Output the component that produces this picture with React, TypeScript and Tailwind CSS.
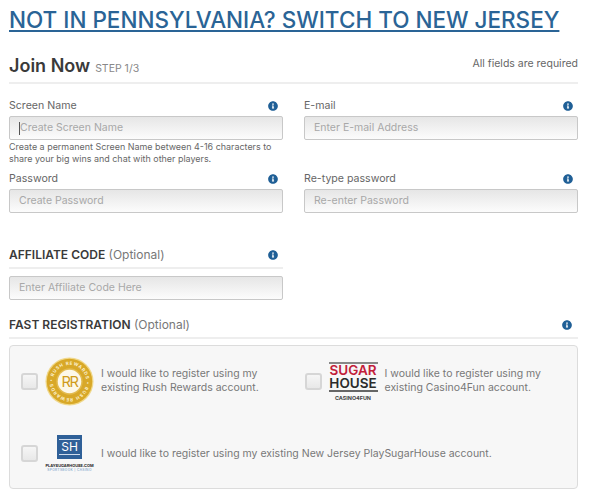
import React from "react";

const font = "font-['Inter','Liberation_Sans',sans-serif]";

const InfoIcon: React.FC = () => (
  <svg viewBox="0 0 512 512" className="w-[10px] h-[10px] fill-[#1f5f96]">
    <path d="M256 8C119 8 8 119 8 256s111 248 248 248 248-111 248-248S393 8 256 8zm0 110c23 0 42 19 42 42s-19 42-42 42-42-19-42-42 19-42 42-42zm56 254c0 7-5 12-12 12h-88c-7 0-12-5-12-12v-24c0-7 5-12 12-12h12v-64h-12c-7 0-12-5-12-12v-24c0-7 5-12 12-12h64c7 0 12 5 12 12v100h12c7 0 12 5 12 12v24z" />
  </svg>
);

const Field: React.FC<{ label: string; placeholder: string; caret?: boolean }> = ({ label, placeholder, caret }) => (
  <div>
    <div className="flex items-center justify-between h-[21px] pr-[5px] text-[10.6px] text-[#666]">
      <span>{label}</span>
      <InfoIcon />
    </div>
    <TextBox placeholder={placeholder} caret={caret} />
  </div>
);

const TextBox: React.FC<{ placeholder: string; caret?: boolean }> = ({ placeholder, caret }) => (
  <div className="flex items-center h-[24px] pl-[9px] rounded-[2px] border border-[#c8c8c8] bg-gradient-to-b from-[#e6e6e6] to-[#fcfcfc] text-[10.5px] text-[#a8a8a8]">
    {caret && <span className="w-px h-[13px] bg-[#555]" />}
    <span>{placeholder}</span>
  </div>
);

const Checkbox: React.FC = () => (
  <div className="shrink-0 w-[17px] h-[17px] rounded-[3px] border-2 border-[#d6d6d6] bg-gradient-to-b from-[#f6f6f6] to-[#e8e8e8]" />
);

const RushLogo: React.FC = () => (
  <svg viewBox="0 0 50 50" className="w-[49px] h-[49px] shrink-0">
    <defs>
      <path id="ring" d="M25 25 m-17 0 a17 17 0 1 1 34 0 a17 17 0 1 1 -34 0" />
    </defs>
    <circle cx="25" cy="25" r="24.5" fill="#f0d88a" />
    <circle cx="25" cy="25" r="23.2" fill="#d8a828" />
    <circle cx="25" cy="25" r="13.5" fill="#e2bb50" />
    <circle cx="25" cy="25" r="12" fill="#fdf8e8" />
    <text fontSize="4.6" fontWeight="700" fill="#fbf0cf" fontFamily="Inter, sans-serif">
      <textPath href="#ring" textLength="104">• RUSH REWARDS • RUSH REWARDS</textPath>
    </text>
    <text x="25" y="30.5" textAnchor="middle" fontSize="15" fill="#cf9c1c" letterSpacing="-1.5" fontFamily="Inter, sans-serif">RR</text>
  </svg>
);

const SugarLogo: React.FC = () => (
  <div className="shrink-0 w-[49px] flex flex-col items-center">
    <div className="w-full border-t-2 border-[#888] text-center text-[13.5px] leading-[13px] font-semibold text-[#c2203a]">SUGAR</div>
    <div className="w-full border-b-2 border-[#666] text-center text-[13.5px] leading-[13px] font-semibold text-[#2b2b2b]">HOUSE</div>
    <div className="mt-[3px] text-[5.4px] leading-[6px] font-bold text-[#444]">CASINO4FUN</div>
  </div>
);

const ShLogo: React.FC = () => (
  <div className="shrink-0 w-[49px] flex flex-col items-center leading-none">
    <div className="w-[25px] h-[24px] bg-[#2f6098] flex flex-col items-center justify-center">
      <div className="w-[21px] border-y border-[#cfdced] text-center text-[12px] text-white py-[1px]">SH</div>
    </div>
    <div className="mt-[5px] text-[3.9px] font-bold text-[#222] whitespace-nowrap">PLAYSUGARHOUSE.COM</div>
    <div className="mt-px text-[3.2px] text-[#5b8fc0] whitespace-nowrap tracking-[0.4px]">SPORTSBOOK | CASINO</div>
  </div>
);

export default function App() {
  return (
    <div className={`${font} w-[605px] h-[499px] overflow-hidden bg-white pl-[9px] pr-[27px] pt-[3px]`}>
      <h1 className="text-[22.5px] leading-[34px] font-medium text-[#2a6496] underline whitespace-nowrap">
        NOT IN PENNSYLVANIA? SWITCH TO NEW JERSEY
      </h1>

      <div className="mt-[14px] flex items-end justify-between h-[33px] pb-[5px] border-b-2 border-[#eee]">
        <div className="flex items-baseline gap-[5px]">
          <span className="text-[18px] leading-none font-semibold text-[#3a3a3a]">Join Now</span>
          <span className="text-[10.5px] text-[#888]">STEP 1/3</span>
        </div>
        <span className="text-[10.5px] text-[#666] mb-[5px]">All fields are required</span>
      </div>

      <div className="mt-[11px] grid grid-cols-2 gap-x-[21px]">
        <div>
          <Field label="Screen Name" placeholder="Create Screen Name" caret />
          <p className="mt-[1px] text-[8.95px] leading-[12px] text-[#666]">
            Create a permanent Screen Name between 4-16 characters to share your big wins and chat with other players.
          </p>
        </div>
        <Field label="E-mail" placeholder="Enter E-mail Address" />
      </div>

      <div className="mt-[3px] grid grid-cols-2 gap-x-[21px]">
        <Field label="Password" placeholder="Create Password" />
        <Field label="Re-type password" placeholder="Re-enter Password" />
      </div>

      <div className="mt-[32px] w-[274px]">
        <div className="flex items-center justify-between h-[20px] pr-[5px] border-b-2 border-[#eee] box-content pb-[2px]">
          <span className="text-[12px] text-[#777]">
            <b className="font-semibold text-[#3a3a3a]">AFFILIATE CODE</b> (Optional)
          </span>
          <InfoIcon />
        </div>
        <div className="mt-[7px]">
          <TextBox placeholder="Enter Affiliate Code Here" />
        </div>
      </div>

      <div className="mt-[15px] flex items-center justify-between h-[20px] pr-[6px] box-content pb-[2px] border-b-2 border-[#eee]">
        <span className="text-[12px] text-[#777]">
          <b className="font-semibold text-[#3a3a3a]">FAST REGISTRATION</b> (Optional)
        </span>
        <InfoIcon />
      </div>

      <div className="mt-[6px] h-[144px] rounded-[4px] border border-[#dcdcdc] bg-[#f7f7f7] pl-[11px] pt-[11px] text-[10.5px] leading-[14px] text-[#777]">
        <div className="grid grid-cols-2 gap-x-[11px]">
          <div className="flex items-center gap-[7px] h-[49px]">
            <Checkbox />
            <RushLogo />
            <span className="pb-[1px]">I would like to register using my<br />existing Rush Rewards account.</span>
          </div>
          <div className="flex items-center gap-[7px] h-[49px]">
            <Checkbox />
            <SugarLogo />
            <span className="pb-[1px]">I would like to register using my<br />existing Casino4Fun account.</span>
          </div>
        </div>
        <div className="mt-[29px] flex items-center gap-[7px]">
          <Checkbox />
          <ShLogo />
          <span>I would like to register using my existing New Jersey PlaySugarHouse account.</span>
        </div>
      </div>
    </div>
  );
}
